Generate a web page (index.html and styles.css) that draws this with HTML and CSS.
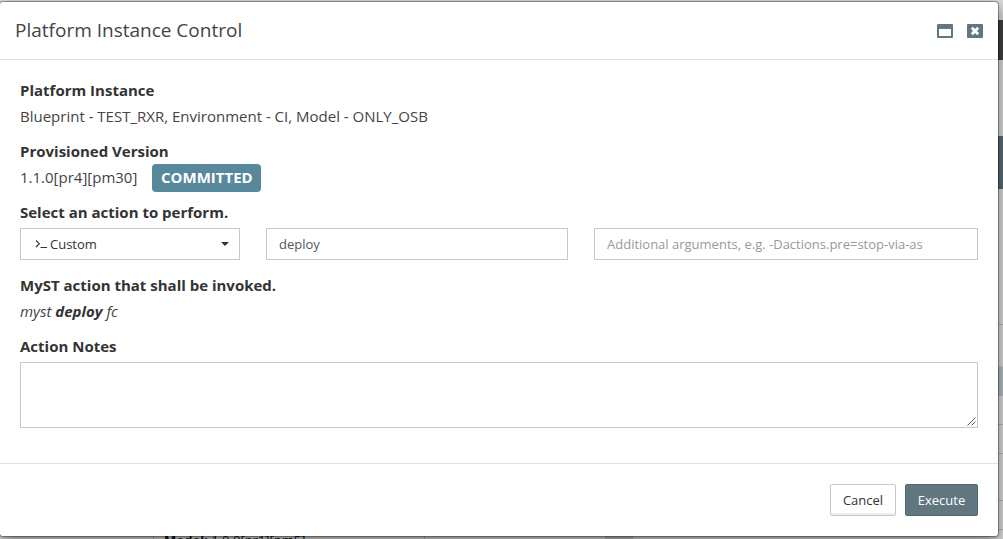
FILE: index.html
```html
<!DOCTYPE html>
<html lang="en">
<head>
<meta charset="utf-8">
<title>Platform Instance Control</title>
<link rel="stylesheet" href="styles.css">
</head>
<body>
<div class="page">
  <div class="rail">
    <div class="rail-top"></div>
    <div class="rail-nav"></div>
    <div class="rail-space"></div>
    <div class="rail-banner"></div>
    <div class="rail-row tall"></div>
    <div class="rail-row second"></div>
    <div class="rail-selected"></div>
    <div class="rail-row r1"></div>
    <div class="rail-row r2"></div>
    <div class="rail-row r3"></div>
    <div class="rail-row r2"></div>
  </div>
  <div class="under"><span class="under-text"><b>Model:</b> 1.0.0[pr1][pm5]</span><span class="under-scroll"></span></div>
</div>
<div class="modal">
  <header class="modal-header">
    <h1 class="title">Platform Instance Control</h1>
    <div class="tools">
      <svg class="tool" width="16" height="14" viewBox="0 0 16 14"><path fill="#607780" fill-rule="evenodd" d="M1 0h14a1 1 0 0 1 1 1v12a1 1 0 0 1-1 1H1a1 1 0 0 1-1-1V1a1 1 0 0 1 1-1zM2 5v7h12V5z"/></svg>
      <svg class="tool" width="16" height="14" viewBox="0 0 16 14"><rect width="16" height="14" rx="1" fill="#607780"/><path d="M4.8 3.8l6.4 6.4M11.2 3.8l-6.4 6.4" stroke="#fff" stroke-width="2.8"/></svg>
    </div>
  </header>
  <main class="modal-body">
    <div class="label">Platform Instance</div>
    <div class="value">Blueprint - TEST_RXR, Environment - CI, Model - ONLY_OSB</div>
    <div class="label">Provisioned Version</div>
    <div class="value version"><span>1.1.0[pr4][pm30]</span><span class="badge">COMMITTED</span></div>
    <div class="label">Select an action to perform.</div>
    <div class="fields">
      <div class="field select">
        <svg width="13" height="12" viewBox="0 0 13 12"><path d="M1 2.5l3.3 3.2L1 9M5.5 9.5H12" fill="none" stroke="#333" stroke-width="1.1"/></svg>
        <span class="select-text">Custom</span>
        <span class="caret"></span>
      </div>
      <div class="field typed">deploy</div>
      <div class="field hint">Additional arguments, e.g. -Dactions.pre=stop-via-as</div>
    </div>
    <div class="label">MyST action that shall be invoked.</div>
    <div class="value command">myst <b>deploy</b> fc</div>
    <div class="label">Action Notes</div>
    <div class="notes">
      <svg width="9" height="9" viewBox="0 0 9 9"><path d="M.5 8.5l8-8M4.5 8.5l4-4" fill="none" stroke="#555" stroke-width="1"/></svg>
    </div>
  </main>
  <footer class="modal-footer">
    <div class="button cancel">Cancel</div>
    <div class="button execute">Execute</div>
  </footer>
</div>
</body>
</html>
```
FILE: styles.css
```css
* { box-sizing: border-box; }
body {
  margin: 0;
  width: 1003px;
  height: 539px;
  overflow: hidden;
  position: relative;
  background: #e0e0e0;
  font-family: "Open Sans", sans-serif;
  font-size: 15px;
  line-height: 21px;
  color: #444;
  white-space: nowrap;
}

/* Page beneath the dialog */
.page {
  height: 539px;
  display: flex;
  flex-direction: column;
  position: relative;
}
.rail {
  width: 8px;
  height: 531px;
  flex: none;
  align-self: flex-end;
  display: flex;
  flex-direction: column;
}
.rail > div { flex: none; }
.rail-top { height: 20px; }
.rail-nav { height: 40px; background: #424242; }
.rail-space { height: 76px; }
.rail-banner { height: 53px; background: #58707a; }
.rail-row { border-bottom: 1px solid #bdbdbd; }
.tall { height: 136px; }
.second { height: 42px; border-bottom: 1px solid #c4cdd0; }
.rail-selected { height: 29px; background: #b6c4c9; }
.r1 { height: 29px; }
.r2 { height: 29px; }
.r3 { height: 47px; }
.under {
  height: 8px;
  display: flex;
  justify-content: space-between;
  padding: 0 370px 0 153px;
}
.under-text {
  width: 272px;
  height: 8px;
  padding-left: 10px;
  border-left: 1px solid #bbb;
  border-right: 1px solid #bbb;
  font-size: 13px;
  line-height: 19px;
  color: #111;
}
.under-scroll { width: 28px; height: 8px; background: #c2c2c2; }

/* Dialog */
.modal {
  position: absolute;
  left: -1px;
  top: 1px;
  width: 1000px;
  height: 536px;
  display: flex;
  flex-direction: column;
  background: #fff;
  background-clip: padding-box;
  border: 1px solid rgba(0, 0, 0, .3);
  border-radius: 4px;
  box-shadow: 0 5px 15px rgba(0, 0, 0, .5);
}
.modal-header {
  height: 58px;
  flex: none;
  display: flex;
  align-items: center;
  justify-content: space-between;
  padding: 0 15px;
  border-bottom: 1px solid #e2e2e2;
}
.title {
  margin: 0 0 2px;
  font-size: 19px;
  line-height: 26px;
  font-weight: 400;
}
.tools { display: flex; gap: 14px; }
.tool { display: block; }
.modal-body { flex: 1; padding: 20px 20px 0; }
.label { height: 21px; margin-bottom: 5px; font-weight: 700; color: #333; }
.value { height: 21px; margin-bottom: 14px; }
.version { display: flex; align-items: center; gap: 15px; }
.badge {
  height: 28px;
  width: 109px;
  text-align: center;
  line-height: 27px;
  border-radius: 4px;
  background: #58889b;
  color: #fff;
  font-weight: 700;
}
.fields {
  display: grid;
  grid-template-columns: 220px 302px 384px;
  gap: 26px;
  margin-bottom: 15px;
}
.field {
  height: 32px;
  padding: 0 12px;
  display: flex;
  align-items: center;
  border: 1px solid #c8c8c8;
  font-size: 13px;
}
.select { padding: 0 10px 0 14px; color: #333; }
.select-text { margin-left: 2px; flex: 1; }
.caret {
  border: 4px solid transparent;
  border-top-color: #333;
  border-bottom: 0;
}
.typed { color: #555; }
.hint { color: #999; }
.command { font-style: italic; }
.command b { color: #333; }
.notes {
  height: 66px;
  border: 1px solid #c8c8c8;
  display: flex;
  align-items: flex-end;
  justify-content: flex-end;
  padding: 1px;
}
.modal-footer {
  height: 73px;
  flex: none;
  border-top: 1px solid #e2e2e2;
  padding: 20px 20px 0;
  display: flex;
  justify-content: flex-end;
  gap: 9px;
}
.button {
  height: 32px;
  border: 1px solid #c8c8c8;
  border-radius: 2px;
  font-size: 13px;
  line-height: 30px;
  text-align: center;
}
.cancel { width: 66px; box-shadow: inset 0 -2px 0 #eee; color: #333; }
.execute { width: 73px; background: #607780; border-color: #52676f; color: #fff; }
```
